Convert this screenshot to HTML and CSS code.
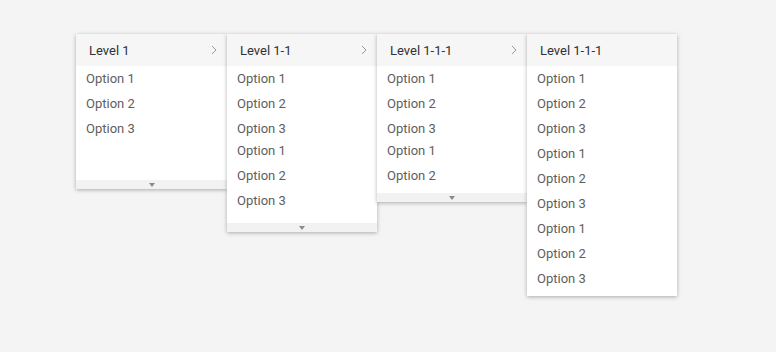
FILE: index.html
```html
<!DOCTYPE html>
<html>
<head>
    <meta charset="UTF-8">
    <link rel="stylesheet" href="styles.css">
</head>
<body>
    <div class="cascade">
        <div class="menu menu-first">
            <div class="menu-header">
                <span>Level 1</span>
                <svg class="chevron" width="6" height="10" viewBox="0 0 6 10"><path d="M1 1l4 4-4 4" fill="none" stroke="#9a9a9a" stroke-width="1"/></svg>
            </div>
            <div class="menu-body body-1">
                <div class="option">Option 1</div>
                <div class="option">Option 2</div>
                <div class="option">Option 3</div>
            </div>
            <div class="menu-more"><span class="caret"></span></div>
        </div>

        <div class="menu">
            <div class="menu-header">
                <span>Level 1-1</span>
                <svg class="chevron" width="6" height="10" viewBox="0 0 6 10"><path d="M1 1l4 4-4 4" fill="none" stroke="#9a9a9a" stroke-width="1"/></svg>
            </div>
            <div class="menu-body body-2">
                <div class="group">
                    <div class="option">Option 1</div>
                    <div class="option">Option 2</div>
                    <div class="option">Option 3</div>
                </div>
                <div class="group group-tight">
                    <div class="option">Option 1</div>
                    <div class="option">Option 2</div>
                    <div class="option">Option 3</div>
                </div>
            </div>
            <div class="menu-more"><span class="caret"></span></div>
        </div>

        <div class="menu">
            <div class="menu-header">
                <span>Level 1-1-1</span>
                <svg class="chevron" width="6" height="10" viewBox="0 0 6 10"><path d="M1 1l4 4-4 4" fill="none" stroke="#9a9a9a" stroke-width="1"/></svg>
            </div>
            <div class="menu-body body-3">
                <div class="group">
                    <div class="option">Option 1</div>
                    <div class="option">Option 2</div>
                    <div class="option">Option 3</div>
                </div>
                <div class="group group-tight">
                    <div class="option">Option 1</div>
                    <div class="option">Option 2</div>
                </div>
            </div>
            <div class="menu-more"><span class="caret"></span></div>
        </div>

        <div class="menu menu-last">
            <div class="menu-header">
                <span>Level 1-1-1</span>
            </div>
            <div class="menu-body">
                <div class="option">Option 1</div>
                <div class="option">Option 2</div>
                <div class="option">Option 3</div>
                <div class="option">Option 1</div>
                <div class="option">Option 2</div>
                <div class="option">Option 3</div>
                <div class="option">Option 1</div>
                <div class="option">Option 2</div>
                <div class="option">Option 3</div>
            </div>
        </div>
    </div>
</body>
</html>
```

FILE: styles.css
```css
body {
    margin: 0;
    width: 776px;
    height: 352px;
    background: #f4f4f4;
    font-family: Roboto, 'Liberation Sans', sans-serif;
    overflow: hidden;
}

.cascade {
    display: flex;
    align-items: flex-start;
    padding: 34px 0 0 76px;
}

.menu {
    width: 150px;
    background: #ffffff;
    box-shadow: 0 1px 4px rgba(0, 0, 0, 0.3);
}

.menu-first {
    width: 151px;
}

.menu-header {
    display: flex;
    align-items: center;
    justify-content: space-between;
    height: 32px;
    padding: 0 10px 0 13px;
    background: #f6f6f6;
    font-size: 13px;
    color: #303133;
}

.chevron {
    display: block;
}

.menu-body {
    overflow: hidden;
}

.body-1 {
    height: 114px;
}

.body-2 {
    height: 157px;
}

.body-3 {
    height: 127px;
}

.group-tight {
    margin-top: -3px;
}

.menu-last .menu-body {
    padding-bottom: 5px;
}

.option {
    height: 25px;
    line-height: 25px;
    padding-left: 10px;
    font-size: 13px;
    color: #5e5e5e;
}

.menu-more {
    display: flex;
    align-items: center;
    justify-content: center;
    height: 9px;
    background: #f2f2f2;
}

.caret {
    width: 0;
    height: 0;
    border-left: 3px solid transparent;
    border-right: 3px solid transparent;
    border-top: 4px solid #8a8a8a;
}
```
